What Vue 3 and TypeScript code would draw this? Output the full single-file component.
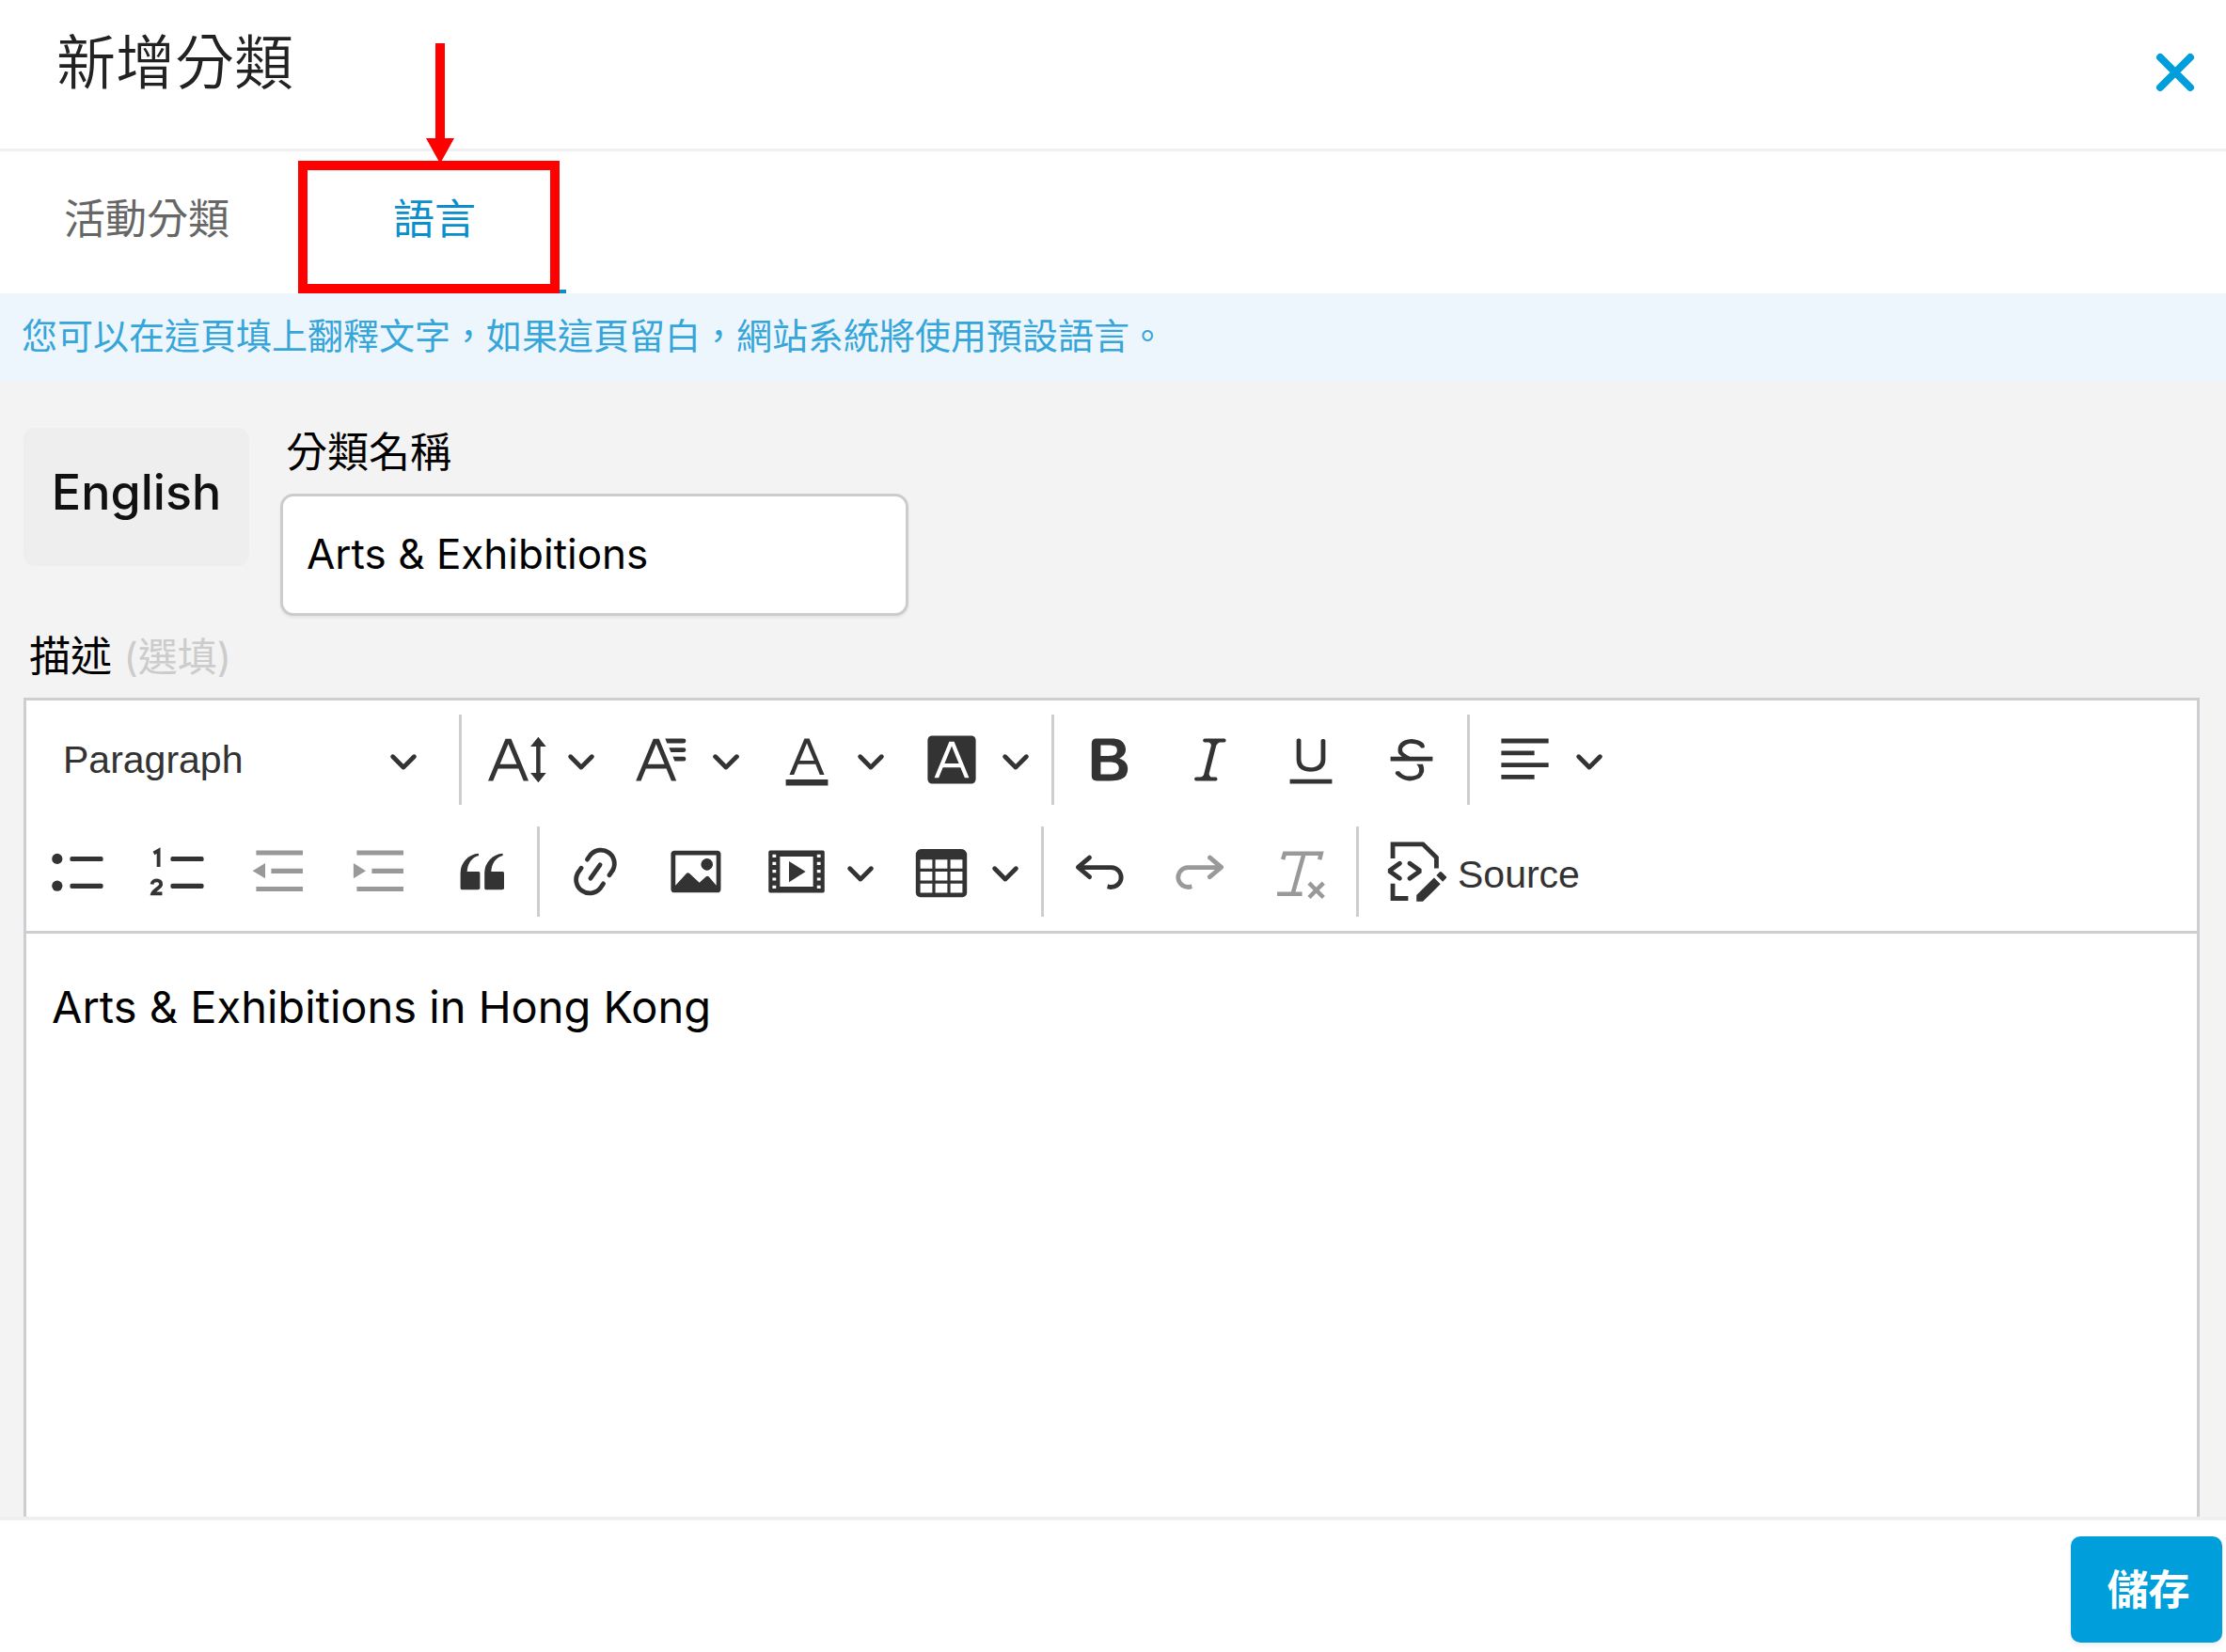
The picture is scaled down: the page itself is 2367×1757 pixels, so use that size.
<script setup lang="ts">
import { ref } from 'vue'

interface Tool {
  name: string
  label: string
  menu?: boolean
  disabled?: boolean
  text?: string
}

const tabs = ['活動分類', '語言']
const activeTab = ref(1)
const categoryName = ref('Arts & Exhibitions')
const description = ref('Arts & Exhibitions in Hong Kong')
const blockStyle = ref('Paragraph')

const firstRow: Tool[][] = [
  [
    { name: 'fontSize', label: 'Font Size', menu: true },
    { name: 'fontFamily', label: 'Font Family', menu: true },
    { name: 'fontColor', label: 'Font Color', menu: true },
    { name: 'fontBackground', label: 'Font Background Color', menu: true },
  ],
  [
    { name: 'bold', label: 'Bold' },
    { name: 'italic', label: 'Italic' },
    { name: 'underline', label: 'Underline' },
    { name: 'strike', label: 'Strikethrough' },
  ],
  [{ name: 'align', label: 'Text alignment', menu: true }],
]

const secondRow: Tool[][] = [
  [
    { name: 'bulleted', label: 'Bulleted List' },
    { name: 'numbered', label: 'Numbered List' },
    { name: 'outdent', label: 'Decrease indent', disabled: true },
    { name: 'indent', label: 'Increase indent', disabled: true },
    { name: 'quote', label: 'Block quote' },
  ],
  [
    { name: 'link', label: 'Link' },
    { name: 'image', label: 'Insert image' },
    { name: 'media', label: 'Insert media', menu: true },
    { name: 'table', label: 'Insert table', menu: true },
  ],
  [
    { name: 'undo', label: 'Undo' },
    { name: 'redo', label: 'Redo', disabled: true },
    { name: 'removeFormat', label: 'Remove Format', disabled: true },
  ],
  [{ name: 'source', label: 'Source', text: 'Source' }],
]

const rows = [firstRow, secondRow]

const icons: Record<string, string> = {
  fontSize:
    '<path d="M9.816 11.5 7.038 4.785 4.261 11.5h5.555zm.62 1.5H3.641l-1.666 4.028H.312l5.789-14h1.875l5.789 14h-1.663L10.436 13z"/><path d="M16.3 5.6h-1.9L17 2.4l2.6 3.2h-1.9v8.8h1.9L17 17.6l-2.6-3.2h1.9z"/>',
  fontFamily:
    '<path d="M11.03 3h6.149a.75.75 0 1 1 0 1.5h-5.514L11.03 3zm1.27 3h4.879a.75.75 0 1 1 0 1.5h-4.244L12.3 6zm1.27 3h3.609a.75.75 0 1 1 0 1.5h-2.973L13.57 9zm-2.754 2.5L8.038 4.785 5.261 11.5h5.555zm.62 1.5H4.641l-1.666 4.028H1.312l5.789-14h1.875l5.789 14h-1.663L11.436 13z"/>',
  fontColor:
    '<path d="M12.4 10.3 10 4.5l-2.4 5.8h4.8zm.5 1.2H7.1L5.7 15H4.2l5-12h1.6l5 12h-1.5l-1.4-3.5zM3 16.6h14v2H3z"/>',
  fontBackground:
    '<path fill-rule="evenodd" d="M3.5 2h13A1.500 1.500 0 0 1 18 3.500v13a1.500 1.500 0 0 1-1.500 1.500h-13A1.500 1.500 0 0 1 2 16.500v-13A1.500 1.500 0 0 1 3.500 2zm8.88 9.262H7.62L10 5.506l2.38 5.756zm.532 1.285L14.34 16h1.426L10.804 4H9.196L4.234 16H5.66l1.428-3.453h5.824z"/>',
  bold:
    '<path d="M10.187 17H5.773c-.637 0-1.092-.138-1.364-.415-.273-.277-.409-.718-.409-1.323V4.738c0-.617.14-1.062.419-1.332.279-.27.73-.406 1.354-.406h4.68c.69 0 1.288.041 1.793.124.506.083.96.242 1.36.478.341.197.644.447.906.75a3.262 3.262 0 0 1 .808 2.162c0 1.401-.722 2.426-2.167 3.075C15.05 10.175 16 11.315 16 13.01a3.756 3.756 0 0 1-2.296 3.504 6.1 6.1 0 0 1-1.517.377c-.571.073-1.238.11-2 .11zm-.217-6.217H7v4.087h3.069c1.977 0 2.965-.69 2.965-2.072 0-.707-.256-1.22-.768-1.537-.512-.319-1.277-.478-2.296-.478zM7 5.13v3.619h2.606c.729 0 1.292-.067 1.69-.2a1.6 1.6 0 0 0 .91-.765c.165-.267.247-.566.247-.897 0-.707-.26-1.176-.778-1.409-.519-.232-1.31-.348-2.375-.348H7z"/>',
  italic:
    '<path d="m9.586 14.633.021.004c-.036.335.095.655.393.962.082.083.173.15.274.201h1.474a.6.6 0 1 1 0 1.2H5.304a.6.6 0 0 1 0-1.2h1.15c.474-.07.809-.182 1.005-.334.157-.122.291-.32.404-.597l2.416-9.55a1.053 1.053 0 0 0-.281-.823 1.12 1.12 0 0 0-.442-.296H8.15a.6.6 0 0 1 0-1.2h6.443a.6.6 0 1 1 0 1.2h-1.195c-.376.056-.65.155-.823.296-.215.175-.423.439-.623.79l-2.366 9.347z"/>',
  underline:
    '<path d="M3 18v-1.5h14V18zm2.2-8V3.6c0-.4.4-.6.8-.6.3 0 .7.2.7.6v6.2c0 2 1.3 2.8 3.2 2.8 1.9 0 3.4-.9 3.4-2.9V3.6c0-.3.4-.5.8-.5.3 0 .7.2.7.5V10c0 2.7-2.2 4-4.9 4-2.6 0-4.7-1.2-4.7-4z"/>',
  strike:
    '<path d="M7 16.4c-.8-.4-1.5-.9-2.2-1.5a.6.6 0 0 1-.2-.5l.3-.6h1c1 1.2 2.1 1.7 3.7 1.7 1 0 1.8-.3 2.3-.6.6-.4.6-1.2.6-1.3.2-1.2-.9-2.1-.9-2.1h2.1c.3.7.4 1.2.4 1.7v.8l-.6 1.2c-.6.8-1.1 1-1.6 1.2a6 6 0 0 1-2.4.6c-1 0-1.8-.3-2.5-.6zM6.8 9 6 8.3c-.4-.5-.5-.8-.5-1.6 0-.7.1-1.3.5-1.8.4-.6 1-1 1.6-1.3a6.3 6.3 0 0 1 4.7 0 4 4 0 0 1 1.7 1l.3.7c0 .1.2.4-.2.7-.4.2-.9.1-1 0a3 3 0 0 0-1.2-1c-.4-.2-1-.3-2-.4-.7 0-1.4.2-2 .6-.8.6-1 .8-1 1.5 0 .8.5 1 1.2 1.5.6.4 1.1.7 1.9 1H6.8zM3 10.5V9h14v1.5z"/>',
  align: '<path d="M2 3h15.7v1.5H2zM2 7h11v1.5H2zM2 11h15.7v1.5H2zM2 15h11v1.5H2z"/>',
  bulleted:
    '<circle cx="2.75" cy="5.75" r="1.75"/><circle cx="2.75" cy="14.75" r="1.75"/><rect x="7" y="5" width="11" height="1.6" rx=".6"/><rect x="7" y="14" width="11" height="1.6" rx=".6"/>',
  numbered:
    '<rect x="7" y="5" width="11" height="1.6" rx=".6"/><rect x="7" y="14" width="11" height="1.6" rx=".6"/><path d="M1.400 3.900 3 3v5.400M.8 14.200c.2-1.700 3.200-1.700 3 .1-.1 1.100-2.400 1.700-2.800 3h3.200" fill="none" stroke="currentColor" stroke-width="1.200"/>',
  outdent:
    '<path d="M2 3h15.500v1.500H2zM7 9h10.500v1.600H7zM2 15h15.500v1.600H2zM.8 9.750 5 7.200v5.100z"/>',
  indent:
    '<path d="M2 3h15.500v1.500H2zM7 9h10.500v1.600H7zM2 15h15.500v1.600H2zM5 9.750.9 7.200v5.100z"/>',
  quote:
    '<path d="M3 10.423a6.5 6.5 0 0 1 6.056-6.408l.038.67C6.448 5.423 5.354 7.663 5.22 10H9c.552 0 .5.432.5.986v4.511c0 .554-.448.503-1 .503h-5c-.552 0-.5-.449-.5-1.003v-4.574zm8 0a6.5 6.5 0 0 1 6.056-6.408l.038.67c-2.646.739-3.74 2.979-3.873 5.315H17c.552 0 .5.432.5.986v4.511c0 .554-.448.503-1 .503h-5c-.552 0-.5-.449-.5-1.003v-4.574z"/>',
  link:
    '<path d="m11.077 15 .991-1.416a.75.75 0 1 1 1.229.86l-1.148 1.64a.748.748 0 0 1-.217.206 5.251 5.251 0 0 1-8.503-5.955.741.741 0 0 1 .12-.274l1.147-1.639a.75.75 0 1 1 1.228.86L4.933 10.7l.006.003a3.75 3.75 0 0 0 6.132 4.294l.006.004zm5.494-5.335a.748.748 0 0 1-.12.274l-1.147 1.639a.75.75 0 1 1-1.228-.86l.86-1.23a3.75 3.75 0 0 0-6.144-4.301l-.86 1.229a.75.75 0 0 1-1.229-.86l1.148-1.64a.748.748 0 0 1 .217-.206 5.251 5.251 0 0 1 8.503 5.955zm-4.563-2.532a.75.75 0 0 1 .184 1.045l-3.155 4.505a.75.75 0 1 1-1.229-.86l3.155-4.506a.75.75 0 0 1 1.045-.184z"/>',
  image:
    '<path d="M6.91 10.54c.26-.23.64-.21.88.03l3.36 3.14 2.23-2.06a.64.64 0 0 1 .87 0l2.52 2.97V4.5H3.2v10.12l3.71-4.08zm10.27-7.51c.6 0 1.09.47 1.09 1.05v11.84c0 .59-.49 1.06-1.09 1.06H2.79c-.6 0-1.09-.47-1.09-1.06V4.08c0-.58.49-1.05 1.1-1.05h14.38zm-5.22 5.56a1.96 1.96 0 1 1 3.4-1.96 1.96 1.96 0 0 1-3.4 1.96z"/>',
  media:
    '<path fill-rule="evenodd" d="M1.200 3h17.600a.5.5 0 0 1 .5.5v13a.5.5 0 0 1-.5.5H1.200a.5.5 0 0 1-.5-.5v-13a.5.5 0 0 1 .5-.5zM4.500 5v10h11V5zM2 4.300v1h1.200v-1zm0 2.500v1h1.200v-1zm0 2.600v1h1.200v-1zM2 12v1h1.200v-1zm0 2.600v1h1.200v-1zM16.800 4.300v1H18v-1zm0 2.500v1H18v-1zm0 2.600v1H18v-1zm0 2.600v1H18v-1zm0 2.600v1H18v-1zM7.500 6.600 13 10l-5.500 3.500z"/>',
  table:
    '<path d="M3 6v3h4V6H3zm0 4v3h4v-3H3zm0 4v3h4v-3H3zm5 3h4v-3H8v3zm5 0h4v-3h-4v3zm4-4v-3h-4v3h4zm0-4V6h-4v3h4zm1.500 8a1.500 1.500 0 0 1-1.500 1.500H3A1.500 1.500 0 0 1 1.500 17V4c.222-.863 1.068-1.500 2-1.500h13c.932 0 1.778.637 2 1.500v13zM12 13v-3H8v3h4zm0-4V6H8v3h4z"/>',
  undo:
    '<path d="m5.042 9.367 2.189 1.837a.75.75 0 0 1-.965 1.149l-3.788-3.18a.747.747 0 0 1-.21-.284.75.75 0 0 1 .17-.945L6.23 4.762a.75.75 0 1 1 .964 1.15L4.863 7.866h8.917A.75.75 0 0 1 14 7.9a4 4 0 1 1-1.477 7.718l.344-1.489a2.5 2.5 0 1 0 1.094-4.73l.008-.032H5.042z"/>',
  redo:
    '<path d="m14.958 9.367-2.189 1.837a.75.75 0 0 0 .965 1.149l3.788-3.18a.747.747 0 0 0 .21-.284.75.75 0 0 0-.17-.945L13.77 4.762a.75.75 0 1 0-.964 1.15l2.331 1.954H6.22A.75.75 0 0 0 6 7.9a4 4 0 1 0 1.477 7.718l-.344-1.489A2.5 2.5 0 1 1 6.039 9.4l-.008-.032h8.927z"/>',
  removeFormat:
    '<path d="M4.100 6 4.700 4h12.100l-.5 2M11.100 4 7.400 17.300M2.200 17.400h8.300M12.800 13.800l4.800 4.800M17.600 13.800l-4.800 4.800" fill="none" stroke="currentColor" stroke-width="1.400"/>',
  source:
    '<path d="M2.200 5.600V.9h10l4.500 4.400v3.600M2.200 14v4.900h5.100" fill="none" stroke="currentColor" stroke-width="1.500"/><path d="M4.060 6.640a.75.75 0 0 1 .958 1.150l-.085.070L2.290 9.750l2.646 1.890c.302.216.4.620.232.951l-.058.095a.75.75 0 0 1-.951.232l-.095-.058-3.500-2.500V9.140l3.496-2.500zm4.194 6.220a.75.75 0 0 1-.958-1.149l.085-.070 2.643-1.890-2.646-1.890a.75.75 0 0 1-.232-.952l.058-.095a.75.75 0 0 1 .950-.232l.096.058 3.500 2.500v1.220l-3.496 2.500zm7.644-.836 2.122 2.122-5.825 5.809-2.125-.005.003-2.116zm2.539-1.847 1.414 1.414a.5.5 0 0 1 0 .707l-1.060 1.060-2.122-2.120 1.061-1.061a.5.5 0 0 1 .707 0z"/>',
}

const chevron =
  'M.941 4.523a.75.75 0 1 1 1.06-1.06l3.006 3.005 3.005-3.005a.75.75 0 1 1 1.06 1.06l-3.549 3.55a.75.75 0 0 1-1.168-.136L.941 4.523z'
</script>

<template>
  <div class="dialog" lang="zh-Hant">
    <header class="head">
      <h1>新增分類</h1>
      <button class="close" type="button" aria-label="關閉">
        <svg viewBox="0 0 44 44"><path d="M6 6 38 38M38 6 6 38" /></svg>
      </button>
    </header>

    <nav class="tabs" role="tablist">
      <div v-for="(tab, i) in tabs" :key="tab" class="tab-slot">
        <button
          class="tab"
          :class="{ active: activeTab === i }"
          type="button"
          role="tab"
          :aria-selected="activeTab === i"
          @click="activeTab = i"
        >
          {{ tab }}
        </button>
        <template v-if="i === 1">
          <span class="callout"></span>
          <svg class="arrow" viewBox="0 0 30 128"><path d="M10 0h10v101h10L15 128 0 101h10z" /></svg>
        </template>
      </div>
    </nav>

    <p class="notice">您可以在這頁填上翻釋文字，如果這頁留白，網站系統將使用預設語言。</p>

    <main class="content">
      <div class="name-row">
        <span class="language">English</span>
        <div class="field">
          <label for="category-name">分類名稱</label>
          <input id="category-name" v-model="categoryName" type="text" />
        </div>
      </div>

      <label class="desc-label" for="description">描述 <span>(選填)</span></label>

      <div class="editor">
        <div class="toolbar" role="toolbar" aria-label="Editor toolbar">
          <div v-for="(row, r) in rows" :key="r" class="tool-row">
            <template v-if="r === 0">
              <div class="heading">
                <select v-model="blockStyle" aria-label="Heading">
                  <option>Paragraph</option>
                  <option>Heading 1</option>
                  <option>Heading 2</option>
                </select>
                <svg class="chevron" viewBox="0 0 10 10"><path :d="chevron" /></svg>
              </div>
              <span class="sep"></span>
            </template>
            <template v-for="(group, g) in row" :key="g">
              <span v-if="g > 0" class="sep"></span>
              <button
                v-for="tool in group"
                :key="tool.name"
                class="tool"
                :class="{ menu: tool.menu, wide: tool.text }"
                type="button"
                :aria-label="tool.label"
                :aria-haspopup="tool.menu ? 'true' : undefined"
                :disabled="tool.disabled"
              >
                <svg class="icon" viewBox="0 0 20 20" v-html="icons[tool.name]"></svg>
                <svg v-if="tool.menu" class="chevron" viewBox="0 0 10 10"><path :d="chevron" /></svg>
                <span v-if="tool.text">{{ tool.text }}</span>
              </button>
            </template>
          </div>
        </div>
        <textarea id="description" v-model="description" spellcheck="false"></textarea>
      </div>
    </main>

    <footer class="foot">
      <button class="save" type="button">儲存</button>
    </footer>
  </div>
</template>

<style>
body {
  margin: 0;
}
</style>

<style scoped>
.dialog {
  display: flex;
  flex-direction: column;
  min-height: 100vh;
  background: #fff;
  color: #000;
  font-family: Inter, 'Noto Sans CJK TC', sans-serif;
}

.dialog *,
.dialog {
  box-sizing: border-box;
}

button,
input,
select,
textarea {
  font-family: inherit;
  margin: 0;
}

button {
  border: 0;
  padding: 0;
  background: none;
  cursor: pointer;
}

.head {
  display: flex;
  justify-content: space-between;
  align-items: flex-start;
  height: 161px;
  padding: 26px 32px 0 60px;
  border-bottom: 3px solid #efefef;
}

h1 {
  margin: 0;
  font-size: 63px;
  font-weight: 350;
  line-height: 80px;
  color: #222;
}

.close {
  width: 44px;
  height: 44px;
  margin-top: 29px;
}

.close svg {
  display: block;
  stroke: #009fdb;
  stroke-width: 8;
  stroke-linecap: round;
}

.tabs {
  display: flex;
  gap: 10px;
  height: 151px;
}

.tab-slot {
  position: relative;
  display: flex;
}

.tab {
  padding: 0 68px 10px;
  border-bottom: 4px solid transparent;
  font-size: 44px;
  color: #666;
}

.tab.active {
  padding: 0 96px 10px;
  border-bottom-color: #0a8fcc;
  color: #0a8fcc;
}

.callout {
  position: absolute;
  top: 10px;
  right: 7px;
  bottom: 0;
  left: -5px;
  border: 10px solid #f00;
  pointer-events: none;
}

.arrow {
  position: absolute;
  top: -115px;
  left: 131px;
  width: 30px;
  height: 128px;
  fill: #f00;
  pointer-events: none;
}

.notice {
  margin: 0;
  padding: 0 23px 4px;
  background: #edf6fd;
  color: #36a5da;
  font-size: 38px;
  line-height: 90px;
}

.content {
  display: flex;
  flex: 1;
  flex-direction: column;
  padding: 49px 28px 0 25px;
  background: #f3f3f3;
}

.name-row {
  display: flex;
  align-items: flex-start;
  gap: 33px;
}

.language {
  width: 240px;
  border-radius: 12px;
  background: #eee;
  color: #111;
  font-size: 52px;
  font-weight: 500;
  line-height: 138px;
  height: 147px;
  text-align: center;
}

.field {
  display: flex;
  flex-direction: column;
}

.field label {
  padding-left: 6px;
  font-size: 44px;
  line-height: 52px;
  margin-bottom: 18px;
}

.field input {
  width: 668px;
  height: 130px;
  padding: 0 25px 2px;
  border: 3px solid #ccc;
  border-radius: 14px;
  background: #fff;
  box-shadow: 0 2px 3px #0001;
  color: #000;
  font-size: 44px;
}

.desc-label {
  padding: 0 6px;
  margin: 16px 0;
  font-size: 44px;
  line-height: 54px;
}

.desc-label span {
  color: #ccc;
  font-size: 42px;
}

.editor {
  display: flex;
  flex: 1;
  flex-direction: column;
  border: 3px solid #ccced1;
  border-bottom: 0;
  background: #fff;
}

.toolbar {
  display: flex;
  flex-direction: column;
  gap: 23px;
  padding: 15px 8px;
  border-bottom: 3px solid #ccced1;
  color: #333;
  font-family: 'Liberation Sans', sans-serif;
}

.tool-row {
  display: flex;
  flex-wrap: wrap;
  gap: 11px;
}

.sep {
  width: 3px;
  height: 96px;
  background: #ccced1;
}

.heading {
  position: relative;
  display: flex;
  align-items: center;
  width: 441px;
  height: 96px;
}

.heading select {
  flex: 1;
  height: 96px;
  padding: 0 31px;
  border: 0;
  appearance: none;
  background: none;
  color: #333;
  font-size: 41px;
}

.heading .chevron {
  position: absolute;
  right: 32px;
  pointer-events: none;
}

.tool {
  display: flex;
  align-items: center;
  width: 96px;
  height: 96px;
  padding-left: 16px;
  color: #333;
}

.tool:disabled {
  color: #999;
}

.tool.menu {
  gap: 20px;
  width: 143px;
}

.tool.wide {
  gap: 12px;
  width: auto;
  padding: 0 18px;
  font-size: 41px;
}

.tool.wide span {
  padding-top: 6px;
}

.icon {
  flex: none;
  width: 64px;
  height: 64px;
  fill: currentColor;
}

.chevron {
  flex: none;
  width: 32px;
  height: 32px;
  fill: #333;
}

textarea {
  flex: 1;
  display: block;
  width: 100%;
  padding: 48px 27px 0;
  border: 0;
  resize: none;
  background: none;
  color: #000;
  font-size: 47px;
  line-height: 60px;
}

.foot {
  display: flex;
  justify-content: flex-end;
  padding: 17px 4px 10px;
  border-top: 4px solid #efefef;
}

.save {
  width: 161px;
  height: 113px;
  padding: 0 0 6px 4px;
  border-radius: 10px;
  background: #009fdb;
  box-shadow: 0 3px 5px #0001;
  color: #fff;
  font-size: 44px;
  font-weight: 700;
}
</style>
